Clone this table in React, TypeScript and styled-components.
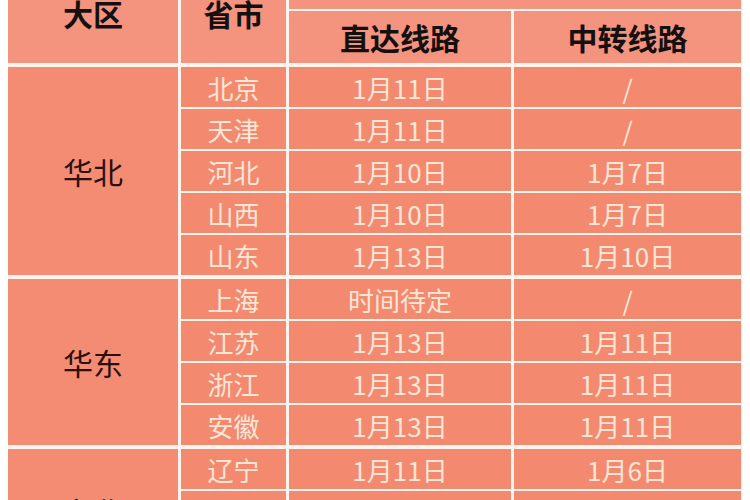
import { createGlobalStyle, styled } from "styled-components"

const GlobalStyle = createGlobalStyle`
  html, body {
    height: 500px;
    overflow: hidden;
  }
  body {
    margin: 0 8px;
    background: #ffffff;
    font-family: "Noto Sans CJK SC", "Noto Sans", sans-serif;
  }
`

interface Region {
  name: string
  rows: [string, string, string][]
}

// 各大区开通时间
const regions: Region[] = [
  {
    name: "华北",
    rows: [
      ["北京", "1月11日", "/"],
      ["天津", "1月11日", "/"],
      ["河北", "1月10日", "1月7日"],
      ["山西", "1月10日", "1月7日"],
      ["山东", "1月13日", "1月10日"],
    ],
  },
  {
    name: "华东",
    rows: [
      ["上海", "时间待定", "/"],
      ["江苏", "1月13日", "1月11日"],
      ["浙江", "1月13日", "1月11日"],
      ["安徽", "1月13日", "1月11日"],
    ],
  },
  {
    name: "东北",
    rows: [
      ["辽宁", "1月11日", "1月6日"],
      ["吉林", "1月11日", "1月6日"],
      ["黑龙江", "1月11日", "1月6日"],
    ],
  },
]

const THIN = 2
const THICK = 4
const ROW = 40

const App = () => {
  const bodyRows = regions
    .flatMap((r) => r.rows.map((_, i) => (i === r.rows.length - 1 ? ROW + THICK : ROW + THIN)))
    .map((h) => `${h}px`)
    .join(" ")

  return (
    <>
      <GlobalStyle />
      <Table $rows={`48px 56px ${bodyRows}`}>
        <HeadCell $span={2} $bottom={THICK}>
          大区
        </HeadCell>
        <HeadCell $span={2} $bottom={THICK}>
          省市
        </HeadCell>
        <TopHeadCell $colSpan={2} $bottom={THIN} $last>
          开通时间
        </TopHeadCell>
        <HeadCell $bottom={THICK}>直达线路</HeadCell>
        <HeadCell $bottom={THICK} $last>
          中转线路
        </HeadCell>
        {regions.map((region) =>
          region.rows.map((row, i) => {
            const bottom = i === region.rows.length - 1 ? THICK : THIN
            return [
              i === 0 ? (
                <RegionCell key={region.name} $span={region.rows.length}>
                  {region.name}
                </RegionCell>
              ) : null,
              <BodyCell key={row[0]} $bottom={bottom}>
                {row[0]}
              </BodyCell>,
              <BodyCell key={row[0] + "-d"} $bottom={bottom}>
                {row[1]}
              </BodyCell>,
              <BodyCell key={row[0] + "-t"} $bottom={bottom} $last>
                {row[2]}
              </BodyCell>,
            ]
          })
        )}
      </Table>
    </>
  )
}

export default App

const Table = styled.div<{ $rows: string }>`
  display: grid;
  grid-template-columns: 173px 108px 225px 227px;
  grid-template-rows: ${(p) => p.$rows};
  width: 733px;
  margin-top: -37px;
  background: #fff5ee;
  box-shadow: 3px 0 4px rgba(0, 0, 0, 0.08);
`

const Cell = styled.div<{ $bottom?: number; $last?: boolean }>`
  box-sizing: border-box;
  display: flex;
  align-items: center;
  justify-content: center;
  border-bottom: ${(p) => p.$bottom ?? THIN}px solid #fff5ee;
  border-right: ${(p) => (p.$last ? 0 : 3)}px solid #fff5ee;
  white-space: nowrap;
`

const HeadCell = styled(Cell)<{ $span?: number; $colSpan?: number }>`
  grid-row: span ${(p) => p.$span ?? 1};
  grid-column: span ${(p) => p.$colSpan ?? 1};
  background: #f4937e;
  color: #141010;
  font-size: 30px;
  font-weight: 700;
`

const TopHeadCell = styled(HeadCell)`
  padding-bottom: 12px;
`

const RegionCell = styled(Cell)<{ $span: number }>`
  grid-row: span ${(p) => p.$span};
  border-bottom-width: ${THICK}px;
  background: #f48c74;
  color: #2a0f0b;
  font-size: 30px;
  font-weight: 400;
`

const BodyCell = styled(Cell)`
  background: #f38a70;
  color: #fde6d6;
  font-size: 26px;
  font-weight: 400;
`
